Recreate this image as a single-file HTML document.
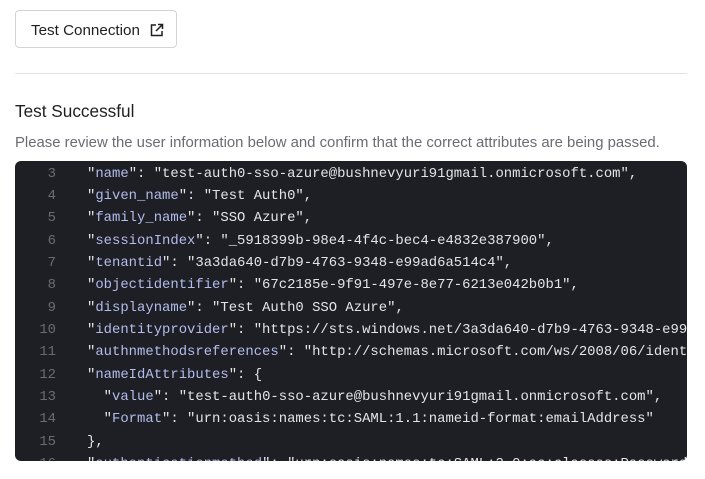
<!DOCTYPE html>
<html><head><style>
body{margin:0;background:#fff;width:705px;height:479px;overflow:hidden;font-family:"Liberation Sans",sans-serif;}
.btn{position:absolute;left:15px;top:10px;height:38px;border:1px solid #d4d4d8;border-radius:4px;box-sizing:border-box;width:162px;font-size:15.2px;color:#1f1f23;}
.btn span{position:absolute;left:15px;top:11px;}
.btn svg{position:absolute;left:134px;top:12px;}
hr{position:absolute;left:15px;top:73px;width:672px;margin:0;border:0;border-top:1px solid #e4e4e7;}
h3{position:absolute;left:15px;top:101px;margin:0;font-size:17.2px;font-weight:normal;color:#1f1f23;}
p{position:absolute;left:15px;top:135px;margin:0;font-size:14.9px;color:#6b6b73;white-space:nowrap;}
.code{position:absolute;left:15px;top:161px;width:672px;height:300px;background:#1e1f24;border-radius:6px;overflow:hidden;font-family:"Liberation Mono",monospace;font-size:13.9px;color:#e4e4e7;}
.l{position:absolute;left:0;height:22px;white-space:pre;}
.n{display:inline-block;width:41px;text-align:right;color:#6b6c73;margin-right:31px;}
.k{color:#b3bcec;}
</style></head><body>
<div class="btn"><span>Test Connection</span>
<svg width="14" height="14" viewBox="0 0 14 14" fill="none" stroke="#1f1f23" stroke-width="1.5"><path d="M6 2H1.5v10.5H12V8"/><path d="M8 1.5h4.5V6M12.5 1.5L6 8"/></svg></div>
<hr>
<h3>Test Successful</h3>
<p>Please review the user information below and confirm that the correct attributes are being passed.</p>
<div class="code">
<div class="l" style="top:5px"><span class="n">3</span>"<span class="k">name</span>": "test-auth0-sso-azure@bushnevyuri91gmail.onmicrosoft.com",</div>
<div class="l" style="top:27px"><span class="n">4</span>"<span class="k">given_name</span>": "Test Auth0",</div>
<div class="l" style="top:49px"><span class="n">5</span>"<span class="k">family_name</span>": "SSO Azure",</div>
<div class="l" style="top:72px"><span class="n">6</span>"<span class="k">sessionIndex</span>": "_5918399b-98e4-4f4c-bec4-e4832e387900",</div>
<div class="l" style="top:94px"><span class="n">7</span>"<span class="k">tenantid</span>": "3a3da640-d7b9-4763-9348-e99ad6a514c4",</div>
<div class="l" style="top:116px"><span class="n">8</span>"<span class="k">objectidentifier</span>": "67c2185e-9f91-497e-8e77-6213e042b0b1",</div>
<div class="l" style="top:139px"><span class="n">9</span>"<span class="k">displayname</span>": "Test Auth0 SSO Azure",</div>
<div class="l" style="top:161px"><span class="n">10</span>"<span class="k">identityprovider</span>": "https://sts.windows.net/3a3da640-d7b9-4763-9348-e99ad6a514c4/",</div>
<div class="l" style="top:183px"><span class="n">11</span>"<span class="k">authnmethodsreferences</span>": "http://schemas.microsoft.com/ws/2008/06/identity/authenticationmethod/password",</div>
<div class="l" style="top:206px"><span class="n">12</span>"<span class="k">nameIdAttributes</span>": {</div>
<div class="l" style="top:228px"><span class="n">13</span>  "<span class="k">value</span>": "test-auth0-sso-azure@bushnevyuri91gmail.onmicrosoft.com",</div>
<div class="l" style="top:250px"><span class="n">14</span>  "<span class="k">Format</span>": "urn:oasis:names:tc:SAML:1.1:nameid-format:emailAddress"</div>
<div class="l" style="top:273px"><span class="n">15</span>},</div>
<div class="l" style="top:295px"><span class="n">16</span>"<span class="k">authenticationmethod</span>": "urn:oasis:names:tc:SAML:2.0:ac:classes:Password",</div>
</div>
</body></html>
